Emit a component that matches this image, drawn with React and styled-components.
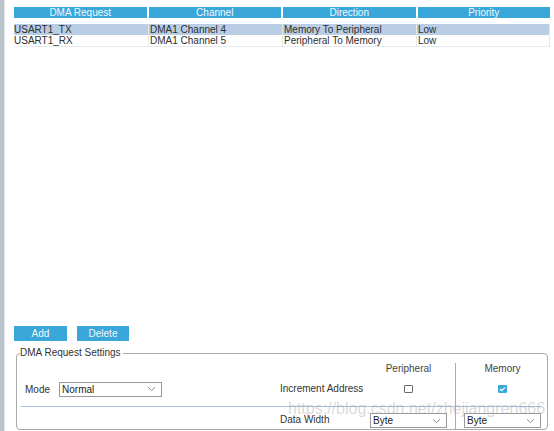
import styled, { createGlobalStyle } from 'styled-components';

const channels = [
  { request: 'USART1_TX', channel: 'DMA1 Channel 4', direction: 'Memory To Peripheral', priority: 'Low' },
  { request: 'USART1_RX', channel: 'DMA1 Channel 5', direction: 'Peripheral To Memory', priority: 'Low' },
];

const columns = ['DMA Request', 'Channel', 'Direction', 'Priority'];

const Chevron = () => (
  <svg width="9" height="6" viewBox="0 0 9 6">
    <path d="M1 1.2 L4.5 4.6 L8 1.2" fill="none" stroke="#8b8b8b" strokeWidth="1" />
  </svg>
);

const Select = ({ value, width }) => (
  <SelectBox $width={width}>
    <span>{value}</span>
    <Chevron />
  </SelectBox>
);

export default function App() {
  return (
    <Page>
      <GlobalStyle />
      <Strip />
      <Main>
        <Header>
          {columns.map((c) => (
            <HeadCell key={c}>{c}</HeadCell>
          ))}
        </Header>
        <Rows>
          {channels.map((row, i) => (
            <Row key={row.request} $selected={i === 0}>
              <Cell>{row.request}</Cell>
              <Cell $split>{row.channel}</Cell>
              <Cell $split>{row.direction}</Cell>
              <Cell $split>{row.priority}</Cell>
            </Row>
          ))}
        </Rows>
        <Spacer />
        <Actions>
          <ActionButton $width={53}>Add</ActionButton>
          <ActionButton $width={52}>Delete</ActionButton>
        </Actions>
        <Settings>
          <Legend>DMA Request Settings</Legend>
          <SettingsGrid>
            <ColTitle $col={3}>Peripheral</ColTitle>
            <VDivider />
            <ColTitle $col={5} $end>Memory</ColTitle>

            <ModeField>
              <Label>Mode</Label>
              <Select value="Normal" width={103} />
            </ModeField>
            <RowLabel $row={2}>Increment Address</RowLabel>
            <BoxSlot $col={3} $row={2}>
              <Check />
            </BoxSlot>
            <BoxSlot $col={5} $row={2} $end>
              <Check $checked>
                <svg width="7" height="6" viewBox="0 0 7 6">
                  <path d="M1 3 L2.8 4.6 L6 1.4" fill="none" stroke="#fff" strokeWidth="1.2" />
                </svg>
              </Check>
            </BoxSlot>

            <HDivider />

            <RowLabel $row={5} $bottom>Data Width</RowLabel>
            <BoxSlot $col={3} $row={5} $bottom>
              <Select value="Byte" width={77} />
            </BoxSlot>
            <BoxSlot $col={5} $row={5} $end $bottom>
              <Select value="Byte" width={77} />
            </BoxSlot>
          </SettingsGrid>
        </Settings>
      </Main>
      <Watermark>https://blog.csdn.net/zhejiangren666</Watermark>
    </Page>
  );
}

const GlobalStyle = createGlobalStyle`
  html, body {
    margin: 0;
    background: #ffffff;
    font-family: "Liberation Sans", Arial, sans-serif;
    color: #2e2e2e;
  }
`;

const Page = styled.div`
  position: relative;
  display: flex;
  width: 554px;
  height: 431px;
  overflow: hidden;
`;

const Strip = styled.div`
  width: 4px;
  background: #b9c4cb;
  border-right: 1px solid #e2e6e9;
`;

const Main = styled.div`
  flex: 1;
  display: flex;
  flex-direction: column;
  padding: 7px 4px 1px 9px;
`;

const Header = styled.div`
  display: grid;
  grid-template-columns: repeat(4, 1fr);
  column-gap: 2px;
  height: 11px;
`;

const HeadCell = styled.div`
  background: #3aa7db;
  color: #f2f8fc;
  font-size: 10px;
  line-height: 11px;
  text-align: center;
`;

const Rows = styled.div`
  margin-top: 6px;
  border-right: 1px solid #e3e7eb;
  border-bottom: 1px solid #e6eaee;
`;

const Row = styled.div`
  display: grid;
  grid-template-columns: repeat(4, 1fr);
  column-gap: 1px;
  height: 11px;
  background: ${(p) => (p.$selected ? '#b9cde4' : 'transparent')};
`;

const Cell = styled.div`
  font-size: 10px;
  line-height: 11px;
  white-space: nowrap;
  padding-left: ${(p) => (p.$split ? '1px' : '0')};
  border-left: ${(p) => (p.$split ? '1px solid #e3e7eb' : 'none')};
`;

const Spacer = styled.div`
  flex: 1;
`;

const Actions = styled.div`
  display: flex;
  gap: 10px;
  margin-bottom: 6px;
`;

const ActionButton = styled.div`
  width: ${(p) => p.$width}px;
  height: 15px;
  background: #3aa7db;
  color: #f2f8fc;
  font-size: 10px;
  line-height: 15px;
  text-align: center;
`;

const Settings = styled.fieldset`
  margin: 0 2px;
  padding: 0 6px 0 4px;
  min-width: 0;
  border: 1px solid #a9a9a9;
  border-radius: 4px;
`;

const Legend = styled.legend`
  padding: 0 2px 0 0;
  margin-left: -1px;
  margin-bottom: -4px;
  font-size: 10px;
  line-height: 12px;
  color: #333;
`;

const SettingsGrid = styled.div`
  display: grid;
  grid-template-columns: 259px 90px 85px 1px 85px;
  grid-template-rows: 26px 16px 9px 1px 22px;
  font-size: 10px;
`;

const ColTitle = styled.div`
  grid-row: 1;
  grid-column: ${(p) => p.$col};
  justify-self: ${(p) => (p.$end ? 'end' : 'start')};
  width: 77px;
  align-self: center;
  text-align: center;
  color: #444;
  line-height: 12px;
  margin-top: 1px;
`;

const VDivider = styled.div`
  grid-row: 1 / -1;
  grid-column: 4;
  margin-top: 8px;
  background: #94acd8;
`;

const HDivider = styled.div`
  grid-row: 4;
  grid-column: 1 / -1;
  background: #a9bde2;
`;

const ModeField = styled.div`
  grid-row: 2;
  grid-column: 1;
  display: flex;
  align-items: center;
  gap: 9px;
  padding-left: 4px;
`;

const Label = styled.span`
  color: #333;
`;

const RowLabel = styled.div`
  grid-row: ${(p) => p.$row};
  grid-column: 2;
  align-self: ${(p) => (p.$bottom ? 'end' : 'center')};
  margin-bottom: ${(p) => (p.$bottom ? '3px' : '0')};
  color: #333;
  white-space: nowrap;
  line-height: 12px;
`;

const BoxSlot = styled.div`
  grid-row: ${(p) => p.$row};
  grid-column: ${(p) => p.$col};
  justify-self: ${(p) => (p.$end ? 'end' : 'start')};
  align-self: ${(p) => (p.$bottom ? 'end' : 'center')};
  margin-bottom: ${(p) => (p.$bottom ? '1px' : '0')};
  width: 77px;
  display: flex;
  justify-content: center;
`;

const Check = styled.div`
  width: 9px;
  height: 8px;
  box-sizing: border-box;
  border: 1px solid ${(p) => (p.$checked ? '#3aa7db' : '#6b6b6b')};
  border-radius: 1px;
  background: ${(p) => (p.$checked ? '#3aa7db' : '#fff')};
  display: flex;
  align-items: center;
  justify-content: center;
`;

const SelectBox = styled.div`
  width: ${(p) => p.$width}px;
  height: 15px;
  box-sizing: border-box;
  border: 1px solid #9a9a9a;
  display: flex;
  align-items: center;
  justify-content: space-between;
  padding: 0 5px 0 2px;
  font-size: 10px;
  color: #222;
  background: #fff;
`;

const Watermark = styled.div`
  position: absolute;
  left: 288px;
  top: 400px;
  font-size: 16px;
  color: rgba(160, 160, 160, 0.4);
  white-space: nowrap;
  pointer-events: none;
`;
